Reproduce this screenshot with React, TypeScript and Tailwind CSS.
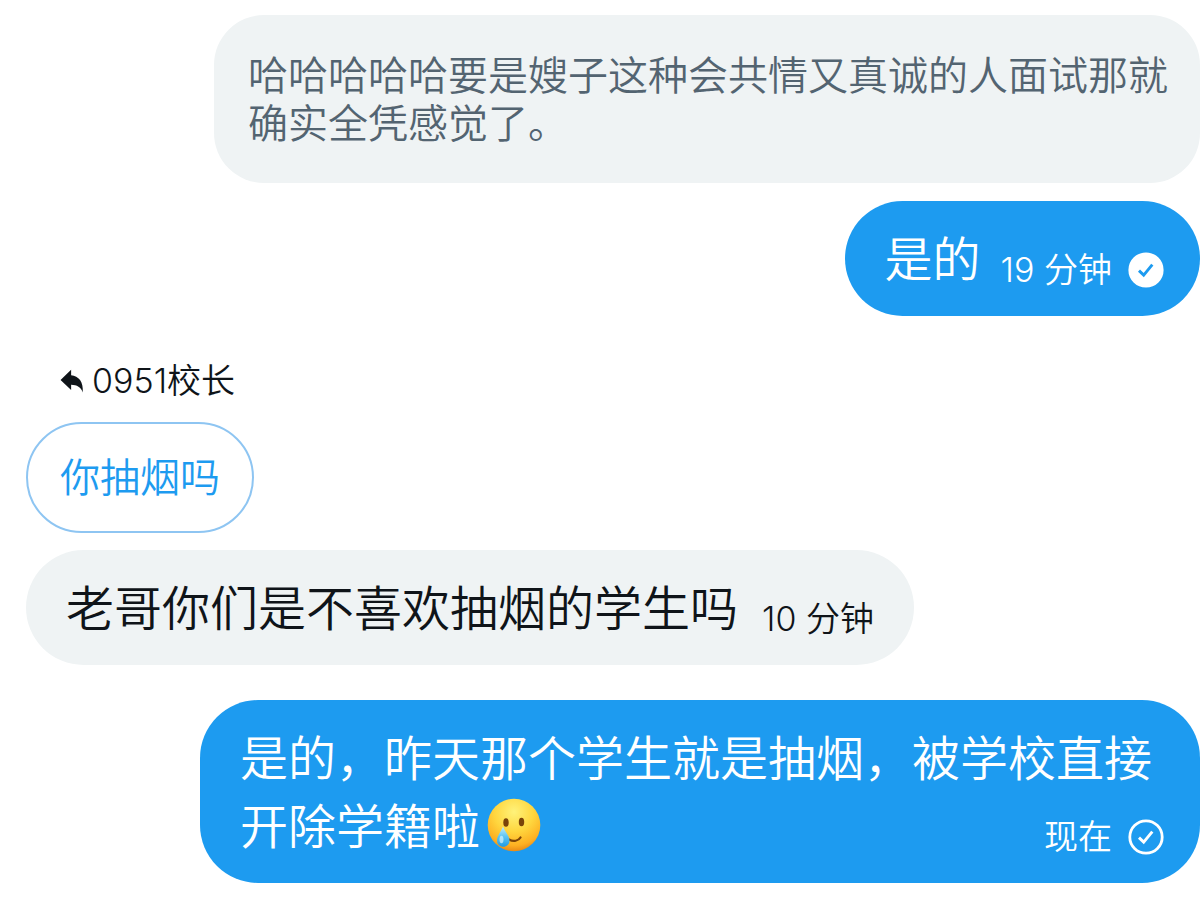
import React from 'react';
import clsx from 'clsx';

type Status = 'read' | 'sent';

function ReplyIcon() {
  return (
    <svg viewBox="0 0 22 22" className="w-6 h-6 shrink-0" fill="currentColor" aria-hidden="true">
      <path d="M0.500 10 10.200 0.800v5C17 6.200 21.800 12 20.800 21.500 19.400 16.500 15.500 14.600 10.200 14.400v4.800z" />
    </svg>
  );
}

function StatusIcon({ status }: { status: Status }) {
  const read = status === 'read';
  return (
    <svg viewBox="0 0 36 36" className="w-9 h-9 shrink-0" fill="none" role="img" aria-label={status}>
      <circle cx="18" cy="18" r="16.2" fill={read ? '#fff' : 'none'} stroke="#fff" strokeWidth="2.8" />
      <path d="m11 18.600 4.700 4.500 8.600-10.400" stroke={read ? '#1d9bf0' : '#fff'} strokeWidth="2.900" />
    </svg>
  );
}

// Smiling face with a tear
function TearFace() {
  return (
    <svg viewBox="0 0 54 54" className="inline-block w-[54px] h-[54px] ml-[7px] align-middle -mt-3" role="img" aria-label="🥲">
      <defs>
        <radialGradient id="face" cx="0.5" cy="0.25" r="0.75">
          <stop offset="0" stopColor="#fff27a" />
          <stop offset="0.5" stopColor="#ffd63e" />
          <stop offset="0.85" stopColor="#fdb022" />
          <stop offset="1" stopColor="#e98a16" />
        </radialGradient>
        <linearGradient id="tear" x1="0" y1="0" x2="0" y2="1">
          <stop offset="0" stopColor="#c5edfb" />
          <stop offset="0.5" stopColor="#5cc4f2" />
          <stop offset="1" stopColor="#1f9be6" />
        </linearGradient>
      </defs>
      <circle cx="27" cy="27" r="26.300" fill="url(#face)" />
      <ellipse cx="19" cy="24.500" rx="2.700" ry="4.300" fill="#7a4309" />
      <ellipse cx="34.500" cy="24" rx="2.700" ry="4.300" fill="#7a4309" />
      <path d="M22 41.500c4.500 2.500 9.500 1.500 11.500-2" fill="none" stroke="#7a4309" strokeWidth="2.200" strokeLinecap="round" />
      <path d="M16 28.500c2 5 6.500 9.500 6.500 14 0 3.900-2.800 6.300-6.200 6.300s-6.300-2.400-6.300-6.300c0-4.500 4-9 6-14z" fill="url(#tear)" />
      <ellipse cx="14.500" cy="41.500" rx="2" ry="3.800" fill="#d8f4fd" opacity="0.7" />
    </svg>
  );
}

interface BubbleProps {
  mine?: boolean;
  className?: string;
  time: string;
  status?: Status;
  children: React.ReactNode;
}

function Bubble({ mine, className, time, status, children }: BubbleProps) {
  return (
    <div
      className={clsx(
        'flow-root rounded-[58px] pl-10 pt-[25px] pb-[22px] text-[48px] leading-[68px]',
        mine ? 'self-end bg-[#1d9bf0] text-white pr-9' : 'self-start bg-[#eff3f4] text-[#0f1419] pr-10',
        className,
      )}
    >
      {children}
      {/* floats to the end of the last line of the message */}
      <span
        className={clsx(
          'float-right flex items-center gap-4 mt-5 text-[34px] leading-[48px]',
          mine ? 'pl-5' : 'pl-6',
        )}
      >
        <time>{time}</time>
        {status && <StatusIcon status={status} />}
      </span>
    </div>
  );
}

export default function App() {
  return (
    <main
      lang="zh-CN"
      className="flex flex-col min-h-screen pt-[15px] pb-[22px] bg-white font-[350] font-['Inter','Noto_Sans_CJK_SC',sans-serif]"
    >
      <blockquote className="self-end max-w-[986px] pl-[34px] pr-8 pt-[37px] pb-[35px] rounded-[50px] bg-[#eff3f4] text-[#536471] text-[40px] leading-[48px]">
        哈哈哈哈哈要是嫂子这种会共情又真诚的人面试那就确实全凭感觉了。
      </blockquote>

      <Bubble mine className="mt-[18px]" time="19 分钟" status="read">
        是的
      </Bubble>

      <section className="flex flex-col items-start pl-[26px]">
        <div className="flex items-center gap-2 mt-[41px] pl-[34px] text-[34px] leading-[48px] text-[#0f1419]">
          <ReplyIcon />
          <span>0951校长</span>
        </div>
        <blockquote className="mt-[17px] px-8 pt-[30px] pb-[29px] rounded-[56px] border-2 border-[#8ec5f2] text-[#1d9bf0] text-[40px] leading-[48px]">
          你抽烟吗
        </blockquote>
        <Bubble className="mt-[17px]" time="10 分钟">
          老哥你们是不喜欢抽烟的学生吗
        </Bubble>
      </section>

      <Bubble mine className="mt-[35px] w-full max-w-[1000px]" time="现在" status="sent">
        是的，昨天那个学生就是抽烟，被学校直接
        <br />
        开除学籍啦
        <TearFace />
      </Bubble>
    </main>
  );
}
